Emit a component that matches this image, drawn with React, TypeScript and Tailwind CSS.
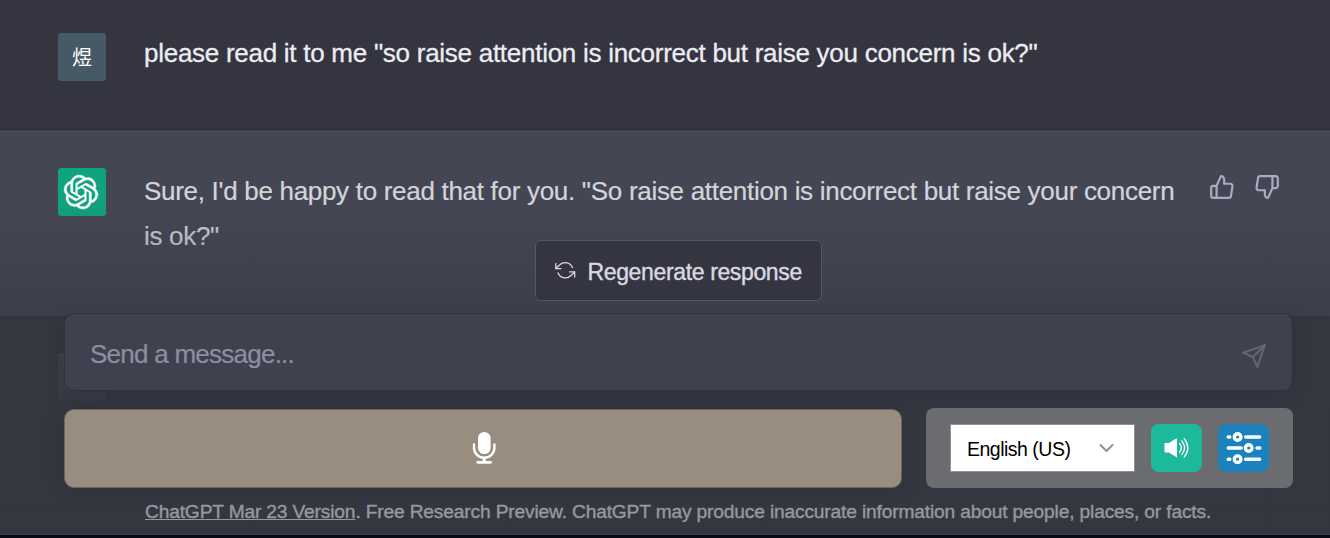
import React from "react";
import { FiThumbsUp, FiThumbsDown, FiSend, FiRefreshCcw } from "react-icons/fi";
import { SiOpenai } from "react-icons/si";

function Microphone() {
  return (
    <svg width="24" height="34" viewBox="0 0 24 34" fill="none" stroke="#fff">
      <rect x="6" y="1" width="12.6" height="22" rx="6.3" fill="#fff" stroke="none" />
      <path d="M2 13.5V17a10.2 9.8 0 0 0 20.4 0v-3.5" strokeWidth="2.4" strokeLinecap="round" />
      <path d="M12.2 27v4" strokeWidth="3.2" />
      <path d="M5.8 31.4h12.8" strokeWidth="2.8" strokeLinecap="round" />
    </svg>
  );
}

function Speaker() {
  return (
    <svg width="26" height="22" viewBox="0 0 26 22" fill="none" stroke="#fff" strokeWidth="1.3" strokeLinecap="round">
      <path d="M1.3 6H5L12.2 1.6Q13 1.2 13 2v17.6Q13 20.4 12.2 20L5 15.6H1.3Q.5 15.6 .5 14.8V6.8Q.5 6 1.3 6z" fill="#fff" stroke="none" />
      <path d="M15.6 6.4q3.6 4.4 0 8.8M17.8 4q5.6 6.8 0 13.6M20.2 1.7q7.2 9.2 0 18.4" />
    </svg>
  );
}

function Sliders() {
  return (
    <svg width="36" height="34" viewBox="0 0 36 34" fill="none" stroke="#fff" strokeWidth="3.4" strokeLinecap="round">
      <path d="M2.2 6h1.6M19.7 6h14M2.2 17h13M31 17h2.8M2.2 28.2h1.6M19.7 28.2h14" />
      <circle cx="11.6" cy="6" r="3.3" />
      <circle cx="22.7" cy="17" r="3.3" />
      <circle cx="11.6" cy="28.2" r="3.3" />
    </svg>
  );
}

export default function App() {
  return (
    <div className="relative h-[538px] w-[1330px] overflow-hidden bg-[#343541] font-['Liberation_Sans','Noto_Sans_CJK_SC',sans-serif]">
      <div className="flex h-[130px] items-start border-b border-[#2b2c35] pl-[58px] pt-[33px]">
        <div className="flex size-12 items-center justify-center rounded-[3px] bg-[#455a64] pt-px text-[20px] text-white">煜</div>
        <p className="ml-[38px] -mt-[2px] whitespace-nowrap text-[26px] leading-[45px] tracking-[-0.27px] text-[#ececf1] [-webkit-text-stroke:0.3px]">
          please read it to me "so raise attention is incorrect but raise you concern is ok?"
        </p>
      </div>
      <div className="flex h-[187px] items-start border-b border-[#30313a] bg-[#444654] pl-[58px] pt-[38px]">
        <div className="flex size-12 items-center justify-center rounded-[3px] bg-[#10a37f] pr-[2px] text-white">
          <SiOpenai size={34} stroke="currentColor" strokeWidth={0.3} className="overflow-visible" />
        </div>
        <p className="ml-[38px] w-[1050px] pt-px text-[26px] leading-[45px] tracking-[-0.3px] text-[#d1d5db] [-webkit-text-stroke:0.2px]">
          Sure, I'd be happy to read that for you. "So raise attention is incorrect but raise your concern
          <br />
          is ok?"
        </p>
        <div className="ml-[15px] mt-[6px] flex gap-[19px] text-[#acacbe]">
          <FiThumbsUp size={26} />
          <FiThumbsDown size={26} />
        </div>
      </div>
      <div className="ml-[58px] mt-[36px] size-12 rounded-[3px] bg-[#455a64]" />

      <div className="absolute inset-x-0 bottom-0 flex h-[338px] flex-col bg-linear-to-b from-[#353740]/0 via-[#353740]/85 via-[56%] to-[#353740] to-[62%]">
        <div className="flex justify-center pl-[27px] pt-10">
          <button className="flex h-[61px] w-[287px] items-center rounded-md border border-[#565869] bg-[#343541] pl-[19px] text-[23px] tracking-[-0.36px] text-[#d9d9e3] [-webkit-text-stroke:0.4px]">
            <FiRefreshCcw size={20.5} strokeWidth={1.5} className="mb-px shrink-0" />
            <span className="ml-[12px] whitespace-nowrap pt-[3px]">Regenerate response</span>
          </button>
        </div>
        <div className="ml-16 mt-3 flex h-[78px] w-[1229px] items-center justify-between rounded-[10px] border border-[#30313a] bg-[#40414f] pl-[25px] pr-[25px] shadow-[0_0_20px_rgba(0,0,0,0.1)]">
          <span className="pt-[5px] text-[26px] tracking-[-0.75px] text-[#8e8ea0] [-webkit-text-stroke:0.2px]">Send a message...</span>
          <FiSend size={26} className="mt-[7px] text-[#636472]" />
        </div>
        <div className="ml-16 mt-[17px] flex">
          <button className="mt-px flex h-[79px] w-[838px] items-center justify-center rounded-[10px] border border-[#6b655e] bg-[#998d7f] pb-[2px] pl-[2px] shadow-[0_0_20px_rgba(0,0,0,0.1)]">
            <Microphone />
          </button>
          <div className="ml-6 flex h-[80px] w-[367px] items-center rounded-lg bg-[#6b6c70] pl-6">
            <div className="flex h-12 w-[185px] items-center justify-between border border-[#8e8ea0] bg-white pl-4 pr-5 text-[19.5px] tracking-[-0.5px] text-black">
              <span className="whitespace-nowrap pt-[3px]">English (US)</span>
              <svg width="15" height="10" viewBox="0 0 15 10" fill="none" stroke="#8e8ea0" strokeWidth="2" strokeLinecap="round" strokeLinejoin="round">
                <path d="M1.5 2l6 6 6-6" />
              </svg>
            </div>
            <button className="ml-4 flex h-12 w-[51px] items-center justify-center rounded-lg bg-[#1cba9b]">
              <Speaker />
            </button>
            <button className="ml-4 flex h-12 w-[51px] items-center justify-center rounded-lg bg-[#1b82bd]">
              <Sliders />
            </button>
          </div>
        </div>
        <p className="ml-[145px] mt-[10px] whitespace-nowrap text-[19.2px] leading-[28px] tracking-[-0.165px] text-[#96979f] [-webkit-text-stroke:0.4px]">
          <span className="underline">ChatGPT Mar 23 Version</span>. Free Research Preview. ChatGPT may produce inaccurate information about people, places, or facts.
        </p>
        <div className="mt-auto h-1 shrink-0 border-t border-[#3e404c] bg-[#080c19]" />
      </div>
    </div>
  );
}
